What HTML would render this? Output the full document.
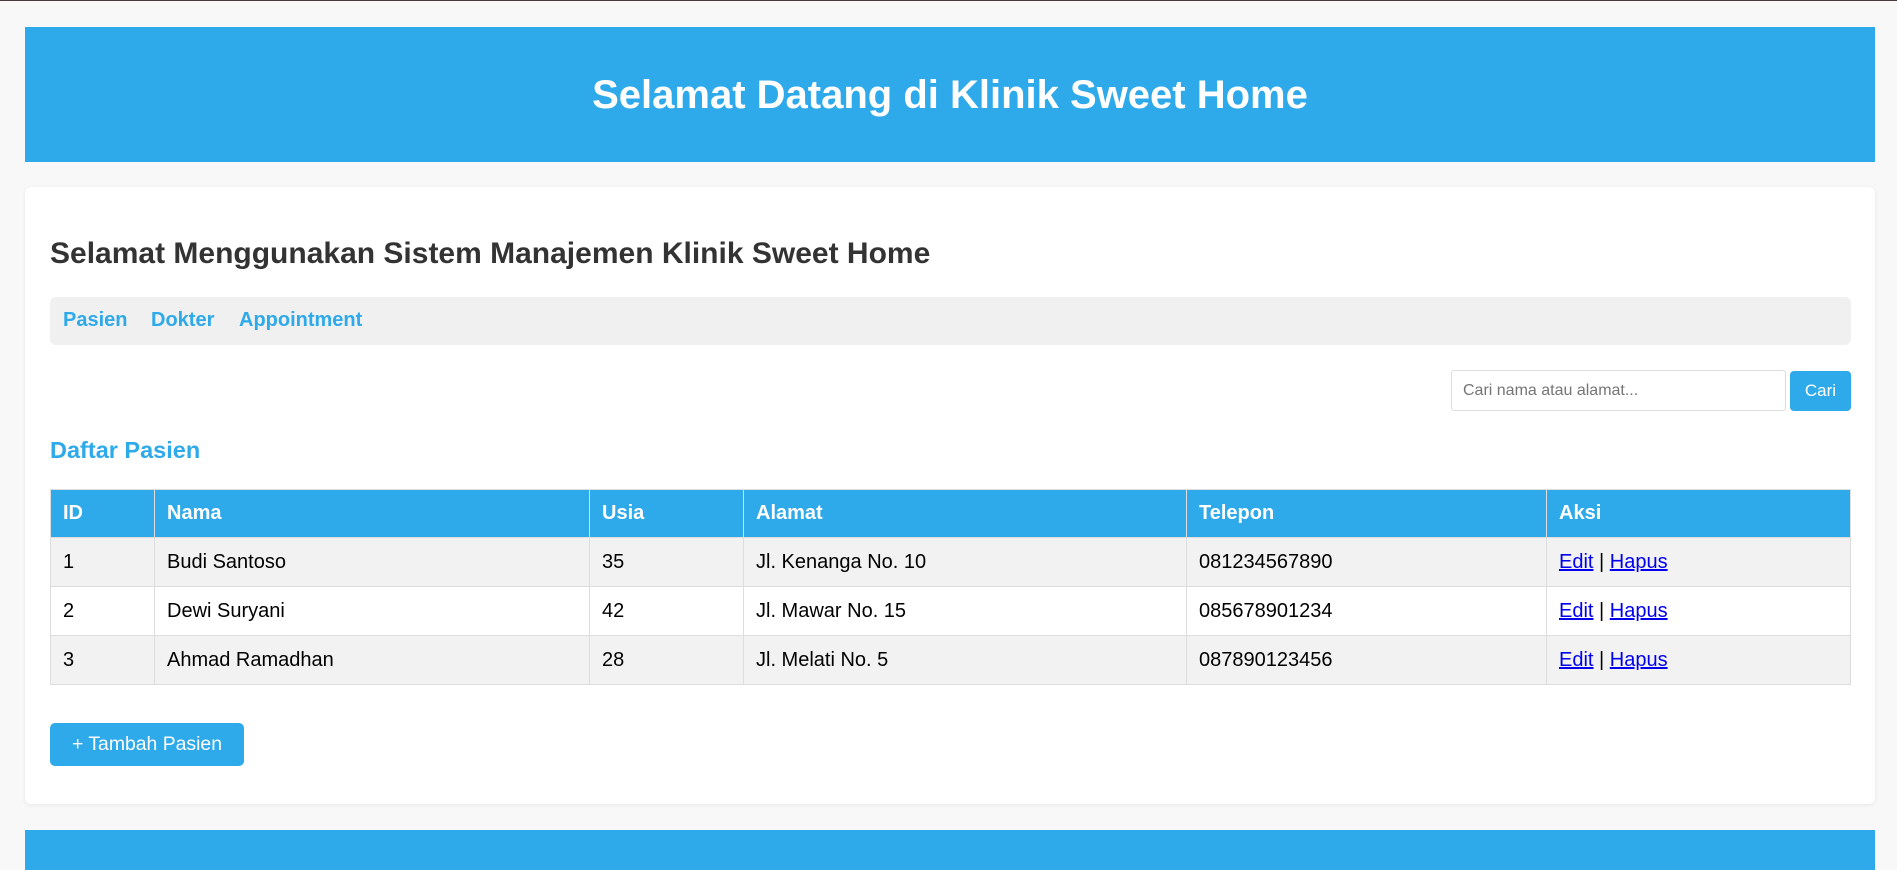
<!DOCTYPE html>
<html><head><meta charset="utf-8"><style>
*{box-sizing:border-box;margin:0;padding:0}
body{width:1897px;height:866px;overflow:hidden;background:#f8f8f8;font-family:"Liberation Sans",Arial,sans-serif;border-top:1px solid #4a3a3a;position:relative}
.hdr{position:absolute;left:25px;top:26px;width:1850px;height:135px;background:#2ea9ea;color:#fff;font-size:40px;font-weight:bold;text-align:center;line-height:137px}
.card{position:absolute;left:25px;top:186px;width:1850px;height:617px;background:#fff;border-radius:6px;box-shadow:0 1px 4px rgba(0,0,0,.08)}
h2{position:absolute;left:25px;top:50px;font-size:30px;color:#333;font-weight:bold}
.nav{position:absolute;left:25px;top:110px;width:1801px;height:48px;background:#f0f0f0;border-radius:6px;font-size:20px;font-weight:bold;color:#2ea9ea;line-height:46px}
.nav span{position:absolute}
.inp{position:absolute;left:1426px;top:183px;width:335px;height:41px;border:1px solid #ddd;border-radius:3px;font-size:16px;color:#757575;padding-left:11px;line-height:39px}
.btn{position:absolute;left:1765px;top:184px;width:61px;height:40px;background:#2ea9ea;border-radius:4px;color:#fff;font-size:17px;text-align:center;line-height:40px}
.dp{position:absolute;left:25px;top:250px;font-size:23.5px;font-weight:bold;color:#2ea9ea}
table{position:absolute;left:25px;top:302px;width:1801px;border-collapse:collapse;font-size:20px}
th,td{border:1.5px solid #ddd;text-align:left;padding:0 12px;height:49px}
th{background:#2ea9ea;color:#fff;height:48px;border-color:#ddd}
tr:nth-child(even) td{background:#f2f2f2}
td a{color:#0000ee;text-decoration:underline}
.add{position:absolute;left:25px;top:536px;width:194px;height:43px;background:#2ea9ea;border-radius:5px;color:#fff;font-size:19.4px;text-align:center;line-height:43px}
.ftr{position:absolute;left:25px;top:829px;width:1850px;height:40px;background:#2ea9ea}
</style></head><body>
<div class="hdr">Selamat Datang di Klinik Sweet Home</div>
<div class="card">
<h2>Selamat Menggunakan Sistem Manajemen Klinik Sweet Home</h2>
<div class="nav"><span style="left:13px">Pasien</span><span style="left:101px">Dokter</span><span style="left:189px">Appointment</span></div>
<div class="inp">Cari nama atau alamat...</div>
<div class="btn">Cari</div>
<div class="dp">Daftar Pasien</div>
<table>
<tr><th style="width:104px">ID</th><th style="width:435px">Nama</th><th style="width:154px">Usia</th><th style="width:443px">Alamat</th><th style="width:360px">Telepon</th><th>Aksi</th></tr>
<tr><td>1</td><td>Budi Santoso</td><td>35</td><td>Jl. Kenanga No. 10</td><td>081234567890</td><td><a>Edit</a> | <a>Hapus</a></td></tr>
<tr><td>2</td><td>Dewi Suryani</td><td>42</td><td>Jl. Mawar No. 15</td><td>085678901234</td><td><a>Edit</a> | <a>Hapus</a></td></tr>
<tr><td>3</td><td>Ahmad Ramadhan</td><td>28</td><td>Jl. Melati No. 5</td><td>087890123456</td><td><a>Edit</a> | <a>Hapus</a></td></tr>
</table>
<div class="add">+ Tambah Pasien</div>
</div>
<div class="ftr"></div>
</body></html>
